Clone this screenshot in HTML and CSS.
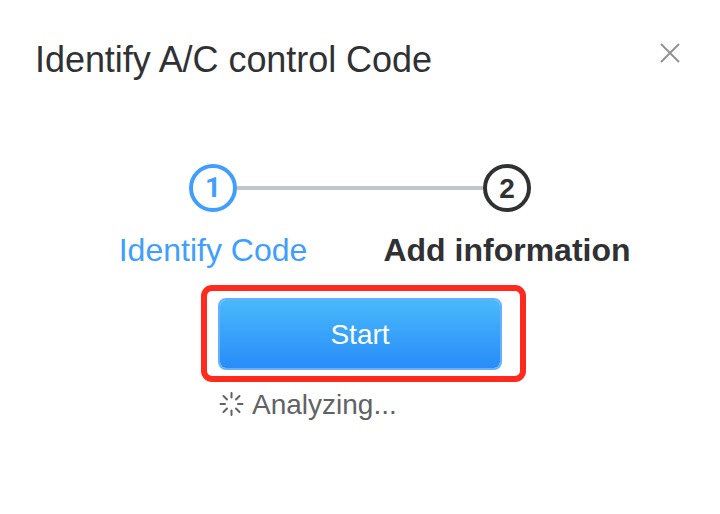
FILE: index.html
```html
<!DOCTYPE html>
<html lang="en">
<head>
<meta charset="utf-8">
<title>Identify A/C control Code</title>
<link rel="stylesheet" href="styles.css">
</head>
<body>
<main class="dialog">
  <header class="header">
    <h1 class="title">Identify A/C control Code</h1>
    <button class="close" aria-label="Close"><svg width="22" height="22" viewBox="0 0 22 22"><path d="M2 2 20 20M20 2 2 20"/></svg></button>
  </header>
  <ol class="steps">
    <li class="step active"><span class="circle first">1</span><span class="label">Identify Code</span></li>
    <li class="step"><span class="circle">2</span><span class="label strong">Add information</span></li>
  </ol>
  <div class="highlight"><button class="start">Start</button></div>
  <div class="status">
    <svg class="spinner" width="26" height="26" viewBox="0 0 26 26"><path d="M13.500 2v4.500M13.500 19.500v4.500M2.500 13h4.500M20 13h4.500M5.500 5l3.500 3.500M18 17.500l3.500 3.500M5.500 21l3.500-3.500M18 8.500l3.500-3.500"/></svg>
    <span class="status-text">Analyzing...</span>
  </div>
</main>
</body>
</html>
```
FILE: styles.css
```css
* { box-sizing: border-box; }
body { margin: 0; background: #fff; font-family: "Liberation Sans", Arial, sans-serif; color: #303133; }
.dialog { width: 720px; height: 514px; overflow: hidden; }
.header { display: flex; justify-content: space-between; align-items: flex-start; height: 164px; padding: 39px 39px 0 35px; }
.title { margin: 0; font-size: 36px; line-height: 42px; font-weight: 400; letter-spacing: -0.05px; white-space: nowrap; }
.close { display: block; width: 22px; height: 22px; margin-top: 3px; padding: 0; border: 0; background: none; }
.close svg { display: block; fill: none; stroke: #909399; stroke-width: 2; }
.steps { display: grid; grid-template-columns: 294px 294px; justify-content: center; height: 121px; margin: 0; padding: 0; list-style: none; }
.step { position: relative; display: flex; flex-direction: column; align-items: center; }
.active { color: #409eff; }
.active::after { content: ""; position: absolute; left: 171px; top: 22px; width: 246px; height: 4px; background: #c0c4cc; }
.circle { display: flex; justify-content: center; align-items: center; width: 48px; height: 48px; border: 4px solid; border-radius: 50%; font-size: 28px; line-height: 32px; font-weight: 700; padding-top: 1px; }
.first { font-family: Roboto, "Liberation Sans", sans-serif; padding-top: 0; }
.label { margin-top: 18px; font-size: 32px; line-height: 40px; white-space: nowrap; }
.strong { font-weight: 700; }
.highlight { width: 325px; height: 97px; margin-left: 201px; padding: 7px 11px; border: 6px solid #ff2a1d; border-radius: 11px; }
.start { display: block; width: 284px; height: 72px; border: 2px solid #66b1ff; border-radius: 8px; background: linear-gradient(#49b9fb, #288cf9) padding-box; color: #fff; font: 28px/68px "Liberation Sans", Arial, sans-serif; padding: 1px 0 0; }
.status { display: flex; align-items: center; height: 44px; margin-left: 218px; color: #606266; font-size: 28px; }
.spinner { fill: none; stroke: #606266; stroke-width: 2; stroke-linecap: round; }
.status-text { margin-left: 8px; padding-top: 2px; }
```
